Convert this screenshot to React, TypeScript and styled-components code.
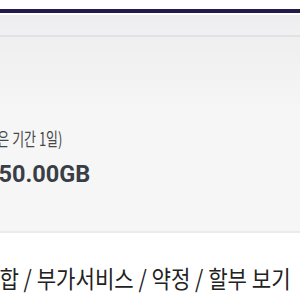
import React from 'react';
import styled, { createGlobalStyle } from 'styled-components';

const GlobalStyle = createGlobalStyle`
  html, body {
    margin: 0;
    padding: 0;
    background: #ffffff;
    font-family: "Noto Sans CJK KR", "Noto Sans", sans-serif;
  }
`;

const Page = styled.div`
  width: 300px;
  height: 300px;
  overflow: hidden;
  background: #ffffff;
`;

const TopBar = styled.div`
  margin-top: 9px;
  height: 4px;
  background: #221c48;
  border-bottom: 2px solid #ffffff;
`;

const SubHeader = styled.div`
  height: 20px;
  background: linear-gradient(#ededf0, #f1f1f3);
  border-bottom: 2px solid #e2e2e4;
`;

const InfoPanel = styled.div`
  height: 196px;
  background: linear-gradient(#efefef, #f6f6f6 40%, #f6f6f6);
  border-bottom: 2px solid #ebebeb;
  display: flex;
  flex-direction: column;
  align-items: flex-start;
  padding-top: 88px;
  box-sizing: border-box;
  overflow: hidden;
`;

/* the source font is narrower than Noto, so squeeze glyphs a little */
const Squeezed = styled.span<{ $scale: number }>`
  display: inline-block;
  transform: scaleX(${p => p.$scale});
  transform-origin: left center;
`;

const Period = styled.div`
  font-size: 18px;
  line-height: 26px;
  color: #474747;
  white-space: nowrap;
  margin-left: -19px;
`;

const Amount = styled.div`
  margin-top: 8px;
  font-family: Roboto, "Noto Sans", sans-serif;
  font-size: 23.5px;
  font-weight: 700;
  line-height: 30px;
  color: #393e46;
  white-space: nowrap;
  margin-left: -15px;
`;

const LinkRow = styled.div`
  padding-top: 28px;
  font-size: 24px;
  line-height: 34px;
  color: #222222;
  white-space: nowrap;
  margin-left: -96px;
`;

export default function App() {
  return (
    <>
      <GlobalStyle />
      <Page>
        <TopBar />
        <SubHeader />
        <InfoPanel>
          <Period>
            <Squeezed $scale={0.72}>(남은 기간 1일)</Squeezed>
          </Period>
          <Amount>150.00GB</Amount>
        </InfoPanel>
        <LinkRow>
          <Squeezed $scale={0.88}>요금제 / 결합 / 부가서비스 / 약정 / 할부 보기</Squeezed>
        </LinkRow>
      </Page>
    </>
  );
}
